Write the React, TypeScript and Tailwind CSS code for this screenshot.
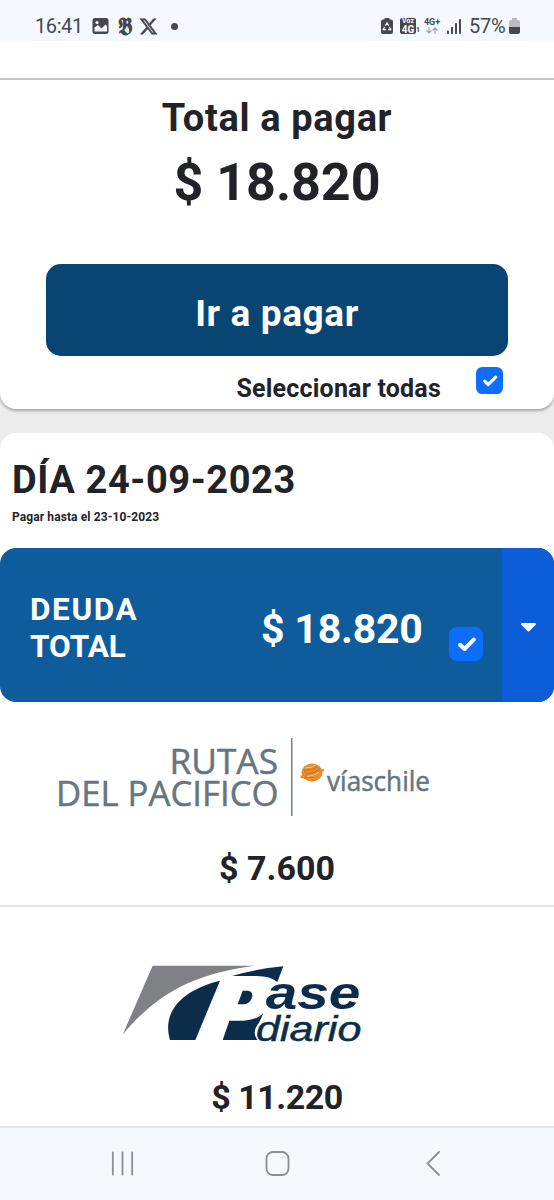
import { FaXTwitter } from "react-icons/fa6";

const SANS = "font-['Roboto','Liberation_Sans',sans-serif]";

function StatusBar() {
  return (
    <header className="flex h-[41px] items-center justify-between bg-[#f5f8fe] pt-[11px] pl-[35px] pr-[34px] text-[#45484c]">
      <div className="flex items-center">
        <span className="w-[57px] text-[20px] leading-6 tracking-[-0.4px]">16:41</span>
        <svg width="17" height="16" viewBox="0 0 17 16" className="shrink-0">
          <rect x="0.5" y="0" width="16" height="16" rx="2.500" fill="#45484c" />
          <path d="M2.500 9.500 6 7l3.500 3.500L13.500 6.500l1.500 1.500v5.500h-12.500Z" fill="#f5f8fe" />
          <circle cx="5" cy="4.500" r="1.600" fill="#f5f8fe" />
        </svg>
        <span className="ml-[7px] w-[17px] scale-y-125 text-center text-[20px] leading-5 font-bold">𝕭</span>
        <FaXTwitter className="ml-[6px]" size={19} stroke="#45484c" strokeWidth={14} />
        <span className="ml-[13px] size-[7px] rounded-full bg-[#45484c]" />
      </div>
      <div className="flex items-center">
        <svg width="12" height="16" viewBox="0 0 12 16">
          <path d="M3.5 0h5v1.500h1.500a2 2 0 0 1 2 2V14a2 2 0 0 1-2 2H2a2 2 0 0 1-2-2V3.500a2 2 0 0 1 2-2h1.500Z" fill="#45484c" />
          <path d="M4.300 7.800 6 5l1.700 2.800M8.500 9l1.300 2.700H7M5 11.700H2.200L3.500 9" fill="none" stroke="#f5f8fe" strokeWidth="1.200" />
        </svg>
        <div className="ml-[7px] flex h-4 w-4 flex-col items-center rounded-[2px] bg-[#45484c] font-bold text-white">
          <span className="text-[7px] leading-[7px]">Voz</span>
          <span className="text-[10px] leading-[9px]">4G</span>
        </div>
        <span className="mt-[9px] w-[4px] text-[7px] leading-[7px] font-bold">1</span>
        <div className="ml-[3px] flex w-[18px] flex-col items-center">
          <span className="text-[9px] leading-[9px] font-bold">4G+</span>
          <svg width="12" height="7" viewBox="0 0 12 7" fill="none" stroke="#9a9da2" strokeWidth="1.100">
            <path d="M3 0v6M.5 3.500 3 6l2.500-2.500M9 7V1M6.500 3.500 9 1l2.500 2.500" />
          </svg>
        </div>
        <svg className="ml-[6px]" width="15" height="15" viewBox="0 0 15 15" fill="#45484c">
          <rect x="0" y="11.500" width="2" height="3.500" rx="0.800" />
          <rect x="4" y="8" width="2" height="7" rx="0.800" />
          <rect x="8" y="4" width="2" height="11" rx="0.800" />
          <rect x="12" y="0" width="2" height="15" rx="0.800" />
        </svg>
        <span className="ml-[7px] w-[40px] text-[20px] leading-6 tracking-[-0.2px]">57%</span>
        <svg width="11" height="16" viewBox="0 0 11 16">
          <path d="M3 0h5v2h1a2 2 0 0 1 2 2v5H0V4a2 2 0 0 1 2-2h1Z" fill="#b9bcc0" />
          <path d="M0 9h11v5a2 2 0 0 1-2 2H2a2 2 0 0 1-2-2Z" fill="#45484c" />
        </svg>
      </div>
    </header>
  );
}

function Check({ className }: { className: string }) {
  return (
    <svg viewBox="0 0 34 34" className={className}>
      <rect width="34" height="34" rx="8" fill="#0d6efd" />
      <path d="M11 17.800 15.500 22 24.800 12.700" fill="none" stroke="#fff" strokeWidth="4" strokeLinecap="round" strokeLinejoin="round" />
    </svg>
  );
}

function RutasLogo() {
  return (
    <svg
      width="376"
      height="78"
      viewBox="0 0 376 78"
      className="ml-[57px] overflow-visible font-['Open_Sans','Noto_Sans',sans-serif]"
      fill="#66757f"
    >
      <g fontSize="35.500" stroke="#66757f" strokeWidth="0.500">
        <text x="112.500" y="36" textLength="108.500" lengthAdjust="spacingAndGlyphs">RUTAS</text>
        <text x="-1" y="68" textLength="222.500" lengthAdjust="spacingAndGlyphs">DEL PACIFICO</text>
      </g>
      <rect x="234" width="1.500" height="78" fill="#75818a" />
      <ellipse cx="255" cy="34.500" rx="10.500" ry="9" fill="#e98b2d" />
      <path d="M243.500 38.500q7 2 12-1M256 34q6 0 11-2" fill="none" stroke="#e98b2d" strokeWidth="2.500" />
      <path d="M247 32q6 1 14-3M249 36q7 0 14-5M247 40q6 0 12-4" fill="none" stroke="#c9701c" strokeWidth="1" />
      <path d="M248 30q5 0 10-2.500M250 38.500q6-.5 12-4" fill="none" stroke="#f8c78d" strokeWidth="1" />
      <text x="270" y="52.500" fontSize="27" stroke="#66757f" strokeWidth="0.500" textLength="103" lengthAdjust="spacingAndGlyphs">víaschile</text>
    </svg>
  );
}

function PaseDiarioLogo() {
  return (
    <svg
      width="242"
      height="78"
      viewBox="36 45 726 234"
      className="ml-[122px] overflow-visible font-['Liberation_Sans',sans-serif] italic"
      fill="#0b2c4a"
    >
      <path d="M128 47H432C290 68 160 105 38 254Z" fill="#808184" />
      <path d="M330 92C215 120 155 185 180 270H256Z" />
      <path d="M366 78Q430 58 520 49L502 96Q482 78 440 78Z" />
      <path d="M398 122H415Q432 126 425 145Q418 163 400 163H383Z" />
      <path d="M358 212H400Q440 210 460 190L447 218Q424 246 442 270H338Z" />
      <text x="467" y="177" fontSize="140" fontWeight="700" textLength="284" lengthAdjust="spacingAndGlyphs">ase</text>
      <text x="438" y="273" fontSize="106" stroke="#0b2c4a" strokeWidth="1.500" textLength="316" lengthAdjust="spacingAndGlyphs">diario</text>
    </svg>
  );
}

function NavBar() {
  return (
    <nav className="flex h-[74px] items-start border-t-2 border-[#e3e5e8] bg-[#f5f9fe] pt-[23px] pl-[111px]">
      <svg width="23" height="25" viewBox="0 0 23 25" stroke="#8a8d91" strokeWidth="1.800" strokeLinecap="round">
        <path d="M1.800 1.500v22M11.500 1.500v22M21.200 1.500v22" />
      </svg>
      <svg width="25" height="25" viewBox="0 0 25 25" fill="none" stroke="#8a8d91" strokeWidth="1.800" className="ml-[131px]">
        <rect x="1.500" y="1" width="22" height="23" rx="6.500" />
      </svg>
      <svg width="15" height="25" viewBox="0 0 15 25" fill="none" stroke="#8a8d91" strokeWidth="1.800" strokeLinecap="round" className="ml-[136px]">
        <path d="M13 1 1.500 12.500 13 24" />
      </svg>
    </nav>
  );
}

export default function App() {
  return (
    <div className={`${SANS} flex h-[1200px] w-[554px] flex-col overflow-hidden bg-[#ededed] text-[#212329]`}>
      <StatusBar />
      <div className="h-[39px] shrink-0 border-b-2 border-[#c6c6c6] bg-white" />

      <section className="flex h-[329px] shrink-0 flex-col items-center rounded-b-[16px] bg-white pt-[14px] shadow-[0_2px_3px_rgba(0,0,0,0.3)]">
        <h1 className="text-[38px] leading-[48px] font-bold tracking-[0.65px]">Total a pagar</h1>
        <p className="mt-[9px] text-[52px] leading-[64px] font-bold">$ 18.820</p>
        <button className="mt-[49px] h-[92px] w-[462px] rounded-[15px] bg-[#094573] pt-[7px] text-[37px] font-bold tracking-[0.6px] text-white">
          Ir a pagar
        </button>
        <div className="flex w-full items-start justify-end pr-[51px]">
          <span className="mt-[17px] mr-[35px] text-[25px] leading-8 font-bold tracking-[0.2px]">Seleccionar todas</span>
          <Check className="mt-[11px] size-[27px]" />
        </div>
      </section>

      <section className="mt-6 flex flex-1 flex-col rounded-t-[16px] bg-white">
        <h2 className="pt-[23px] pl-3 text-[38px] leading-[48px] font-bold tracking-[0.6px]">DÍA 24-09-2023</h2>
        <p className="mt-1 pl-3 text-[12px] leading-[18px] font-bold tracking-[0.1px]">Pagar hasta el 23-10-2023</p>

        <div className="mt-[22px] flex h-[154px] overflow-hidden rounded-[16px] bg-[#0e5c9b] text-white">
          <div className="flex flex-1 items-center pt-[6px] pl-[30px]">
            <p className="w-[231px] text-[31.500px] leading-[37px] font-bold">
              <span className="tracking-[1.600px]">DEUDA</span>
              <br />
              <span>TOTAL</span>
            </p>
            <p className="mt-[2px] w-[188px] text-[41px] leading-[48px] font-bold tracking-[-0.2px] whitespace-nowrap">$ 18.820</p>
            <Check className="mt-8 size-[34px]" />
          </div>
          <button className="flex w-[52px] items-center justify-center bg-[#0b5ed7]">
            <svg width="17" height="11" viewBox="0 0 17 11" fill="#fff" stroke="#fff" strokeWidth="2" strokeLinejoin="round" className="mt-[5px]">
              <path d="M2 2h13L8.500 8.500Z" />
            </svg>
          </button>
        </div>

        <div className="flex flex-col border-b-2 border-[#e2e3e5] pt-9 pb-[17px]">
          <RutasLogo />
          <p className="mt-8 text-center text-[34px] leading-10 font-bold">$ 7.600</p>
        </div>
        <div className="flex flex-col pt-[58px]">
          <PaseDiarioLogo />
          <p className="mt-[34px] text-center text-[34px] leading-10 font-bold tracking-[-0.5px]">$ 11.220</p>
        </div>
      </section>
      <NavBar />
    </div>
  );
}
